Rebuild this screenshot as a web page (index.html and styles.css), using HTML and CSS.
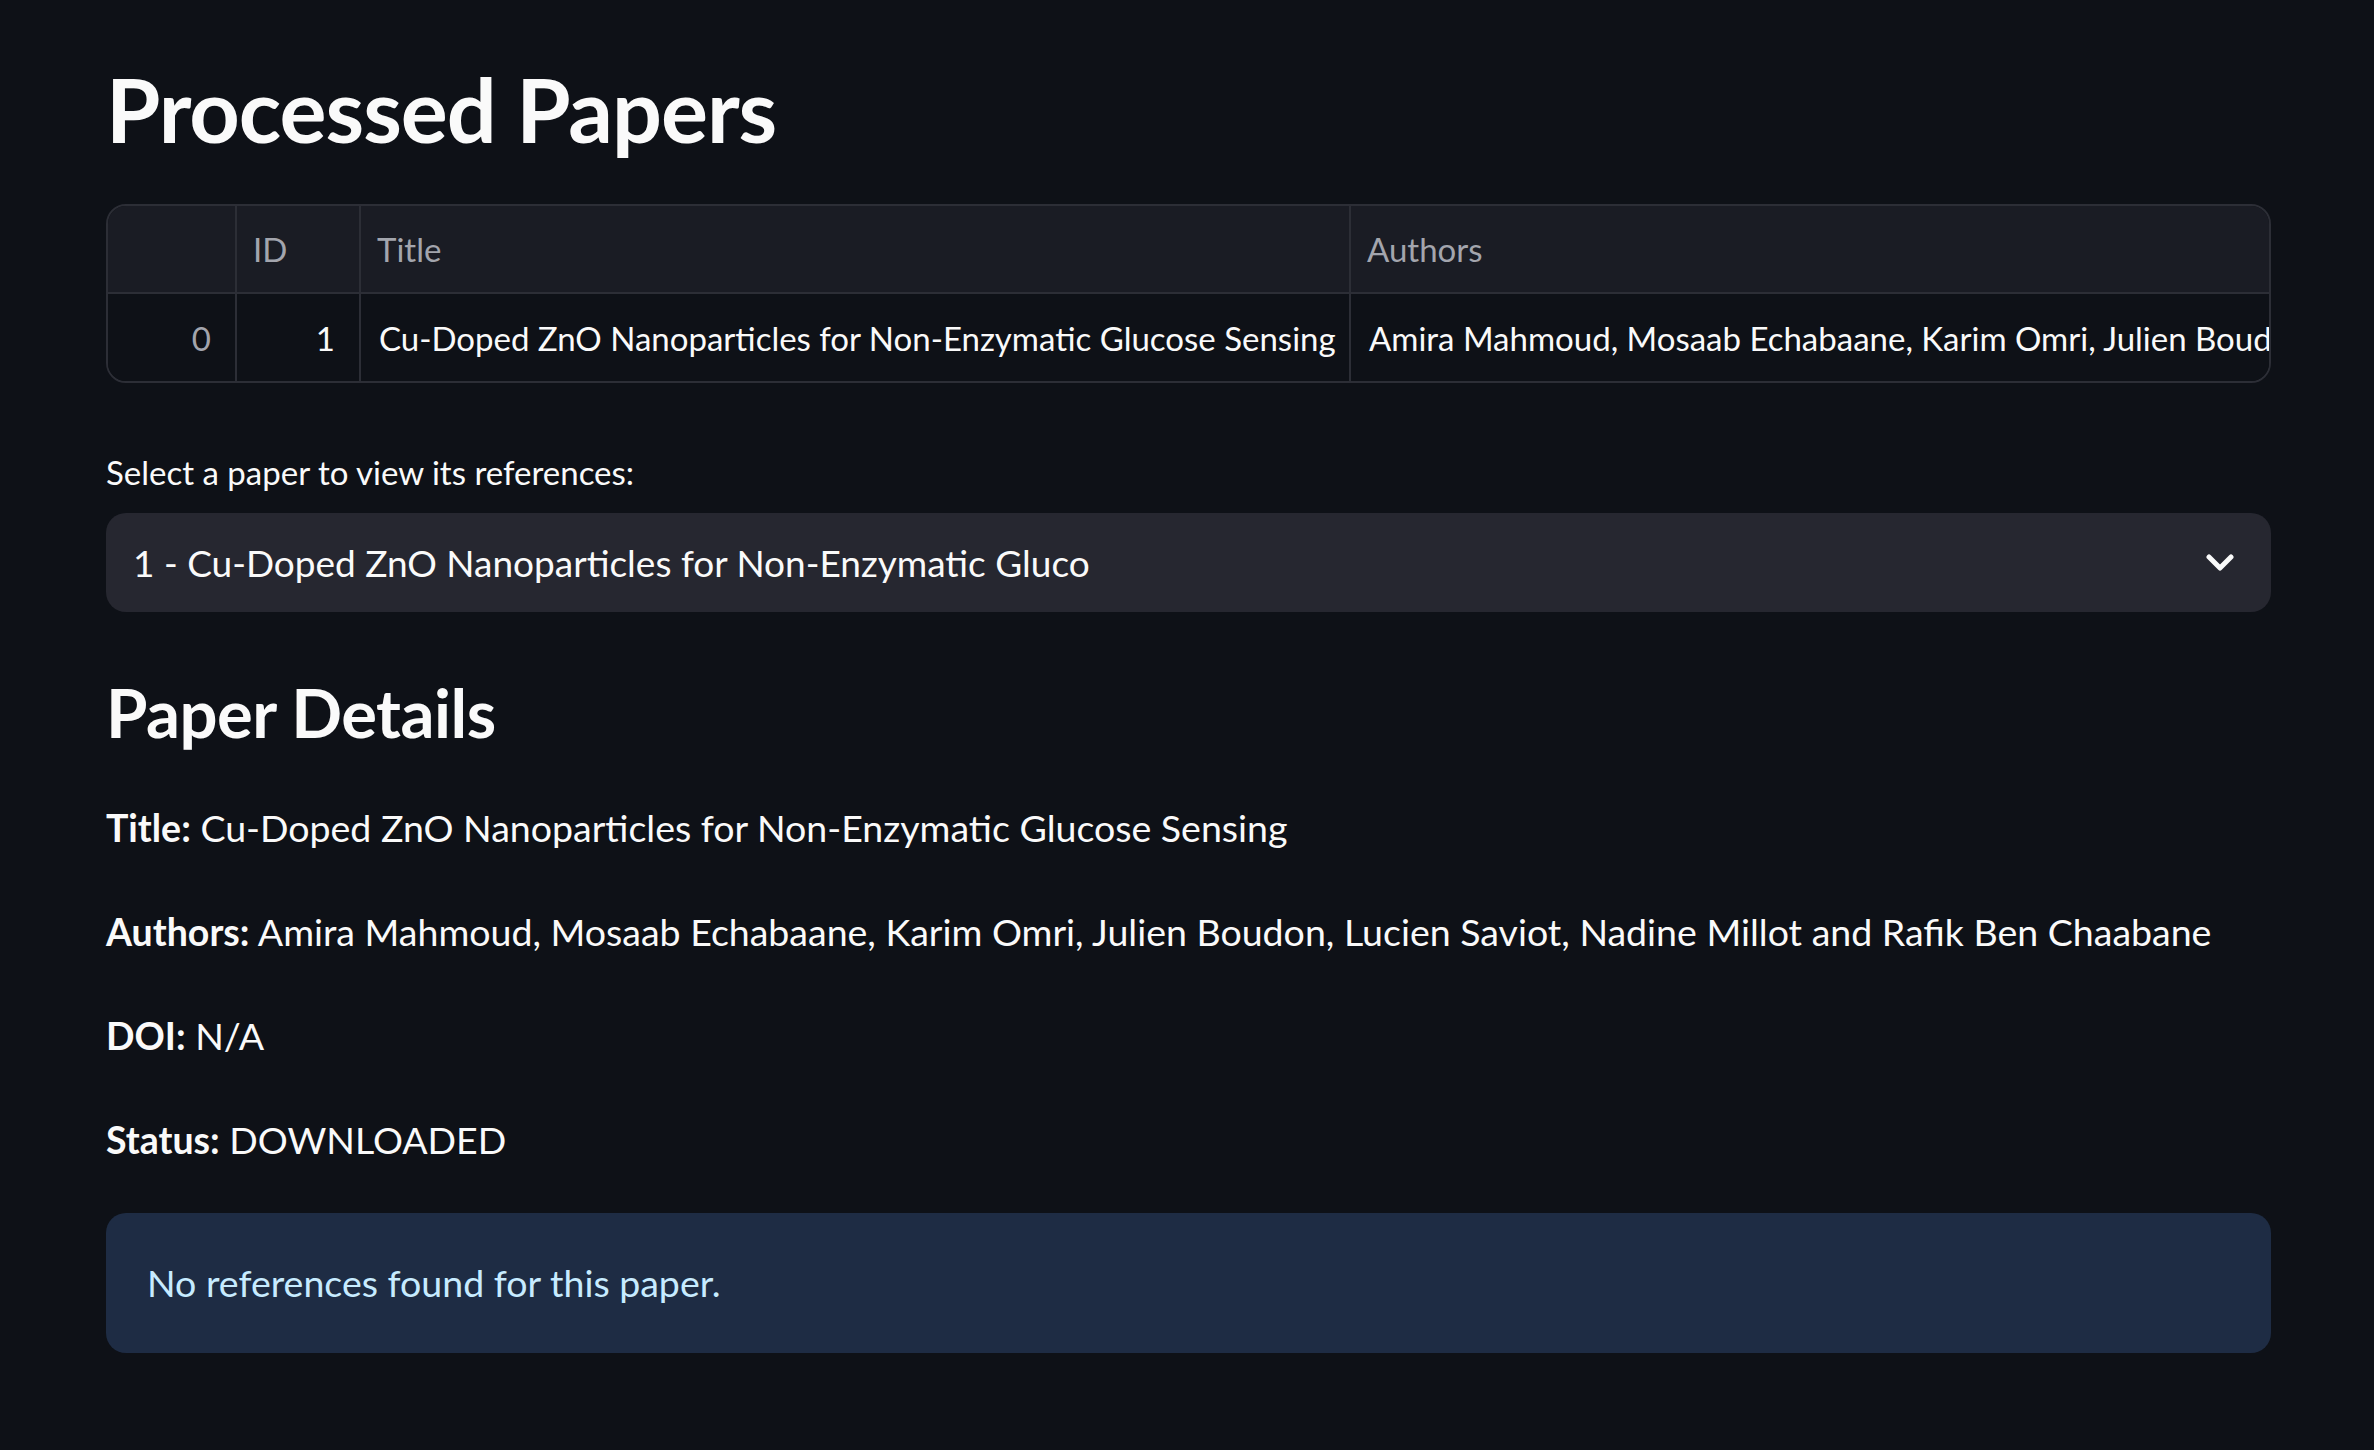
FILE: index.html
```html
<!DOCTYPE html>
<html>
<head>
<meta charset="utf-8">
<link rel="stylesheet" href="styles.css">
</head>
<body>
<main class="main">
  <h1 class="h1">Processed Papers</h1>
  <div class="grid">
    <div class="cell head idx"></div>
    <div class="cell head">ID</div>
    <div class="cell head">Title</div>
    <div class="cell head last">Authors</div>
    <div class="cell idx num">0</div>
    <div class="cell num">1</div>
    <div class="cell">Cu-Doped ZnO Nanoparticles for Non-Enzymatic Glucose Sensing</div>
    <div class="cell last">Amira Mahmoud, Mosaab Echabaane, Karim Omri, Julien Boudon, Lucien Saviot, Nadine Millot and Rafik Ben Chaabane</div>
  </div>
  <div class="label">Select a paper to view its references:</div>
  <div class="select">
    <span class="select-text">1 - Cu-Doped ZnO Nanoparticles for Non-Enzymatic Gluco</span>
    <svg class="chev" width="28" height="20" viewBox="0 0 28 20"><path d="M3 4 L14 15 L25 4" fill="none" stroke="#fafafa" stroke-width="5" stroke-linecap="round" stroke-linejoin="round"/></svg>
  </div>
  <h2 class="h2">Paper Details</h2>
  <p class="p"><b>Title:</b> Cu-Doped ZnO Nanoparticles for Non-Enzymatic Glucose Sensing</p>
  <p class="p"><b>Authors:</b> Amira Mahmoud, Mosaab Echabaane, Karim Omri, Julien Boudon, Lucien Saviot, Nadine Millot and Rafik Ben Chaabane</p>
  <p class="p"><b>DOI:</b> N/A</p>
  <p class="p"><b>Status:</b> DOWNLOADED</p>
  <div class="info">No references found for this paper.</div>
</main>
</body>
</html>
```
FILE: styles.css
```css
html, body {
  margin: 0;
  background: #0e1117;
  color: #fafafa;
  font-family: "Lato", "Open Sans", sans-serif;
}
.main {
  padding: 0 103px 80px 106px;
  display: flex;
  flex-direction: column;
}
.h1 {
  margin: 51px 0 0 0;
  font-size: 88px;
  line-height: 117px;
  font-weight: 700;
  letter-spacing: -1px;
}
.grid {
  margin-top: 36px;
  display: grid;
  grid-template-columns: 129px 124px 990px 1fr;
  border: 2px solid #2c2e36;
  border-radius: 20px;
  overflow: hidden;
  font-size: 33px;
}
.cell {
  height: 87px;
  display: flex;
  align-items: center;
  padding: 0 18px;
  white-space: nowrap;
  overflow: hidden;
  border-right: 2px solid #2c2e36;
  background: #0e1117;
}
.cell.last { border-right: none; }
.head {
  height: 86px;
  background: #1a1c24;
  color: #a3a5ad;
  border-bottom: 2px solid #2c2e36;
  padding-left: 16px;
}
.num { justify-content: flex-end; padding-right: 24px; }
.idx.num { color: #a3a5ad; }
.label {
  margin-top: 61px;
  font-size: 33px;
  line-height: 56px;
}
.select {
  margin-top: 13px;
  height: 99px;
  background: #262730;
  border-radius: 20px;
  display: flex;
  align-items: center;
  justify-content: space-between;
  padding: 0 37px 0 27px;
  font-size: 37px;
}
.h2 {
  margin: 46px 0 0 0;
  font-size: 67px;
  line-height: 108px;
  font-weight: 700;
  letter-spacing: -0.5px;
}
.p {
  margin: 0 0 40px 0;
  font-size: 37.5px;
  line-height: 64px;
}
.h2 + .p { margin-top: 30px; }
.p b { font-weight: 700; }
.info {
  margin-top: 1px;
  background: #1e2c44;
  color: #c7ebff;
  border-radius: 20px;
  padding: 38px 41px;
  font-size: 37.5px;
  line-height: 64px;
}
```
